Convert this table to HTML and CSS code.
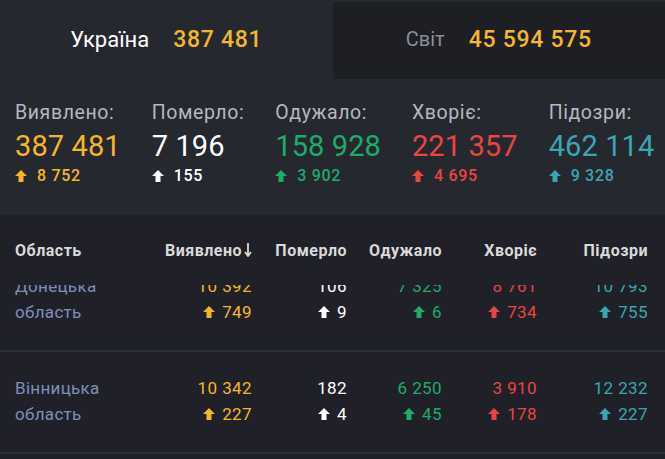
FILE: index.html
```html
<!DOCTYPE html>
<html lang="uk">
<head>
<meta charset="utf-8">
<link rel="stylesheet" href="styles.css">
</head>
<body>
<div class="page">
  <div class="tabs">
    <div class="tab tab-active"><span class="tab-name">Україна</span><span class="tab-num">387 481</span></div>
    <div class="tab tab-other"><span class="tab-name muted">Світ</span><span class="tab-num">45 594 575</span></div>
  </div>

  <div class="stats">
    <div class="stat">
      <div class="stat-label">Виявлено:</div>
      <div class="stat-value c-yellow">387 481</div>
      <div class="stat-delta c-yellow"><svg class="arr" viewBox="0 0 12 12"><polygon points="6,0 12,6 8.5,6 8.5,12 3.5,12 3.5,6 0,6"/></svg>8 752</div>
    </div>
    <div class="stat">
      <div class="stat-label">Померло:</div>
      <div class="stat-value c-white">7 196</div>
      <div class="stat-delta c-white"><svg class="arr" viewBox="0 0 12 12"><polygon points="6,0 12,6 8.5,6 8.5,12 3.5,12 3.5,6 0,6"/></svg>155</div>
    </div>
    <div class="stat">
      <div class="stat-label">Одужало:</div>
      <div class="stat-value c-green">158 928</div>
      <div class="stat-delta c-green"><svg class="arr" viewBox="0 0 12 12"><polygon points="6,0 12,6 8.5,6 8.5,12 3.5,12 3.5,6 0,6"/></svg>3 902</div>
    </div>
    <div class="stat">
      <div class="stat-label">Хворіє:</div>
      <div class="stat-value c-red">221 357</div>
      <div class="stat-delta c-red"><svg class="arr" viewBox="0 0 12 12"><polygon points="6,0 12,6 8.5,6 8.5,12 3.5,12 3.5,6 0,6"/></svg>4 695</div>
    </div>
    <div class="stat">
      <div class="stat-label">Підозри:</div>
      <div class="stat-value c-teal">462 114</div>
      <div class="stat-delta c-teal"><svg class="arr" viewBox="0 0 12 12"><polygon points="6,0 12,6 8.5,6 8.5,12 3.5,12 3.5,6 0,6"/></svg>9 328</div>
    </div>
  </div>

  <div class="table">
    <div class="thead grid">
      <div class="th left">Область</div>
      <div class="th">Виявлено<svg class="sort" viewBox="0 0 8 14"><path d="M4 0 V12 M1 9 L4 13 L7 9" fill="none" stroke="currentColor" stroke-width="1.8"/></svg></div>
      <div class="th">Померло</div>
      <div class="th">Одужало</div>
      <div class="th">Хворіє</div>
      <div class="th">Підозри</div>
    </div>
    <div class="tbody">
      <div class="row grid first">
        <div class="name">Донецька<br>область</div>
        <div class="cell c-yellow"><div>10 392</div><div><svg class="arr" viewBox="0 0 12 12"><polygon points="6,0 12,6 8.5,6 8.5,12 3.5,12 3.5,6 0,6"/></svg>749</div></div>
        <div class="cell c-white"><div>106</div><div><svg class="arr" viewBox="0 0 12 12"><polygon points="6,0 12,6 8.5,6 8.5,12 3.5,12 3.5,6 0,6"/></svg>9</div></div>
        <div class="cell c-green"><div>7 325</div><div><svg class="arr" viewBox="0 0 12 12"><polygon points="6,0 12,6 8.5,6 8.5,12 3.5,12 3.5,6 0,6"/></svg>6</div></div>
        <div class="cell c-red"><div>8 761</div><div><svg class="arr" viewBox="0 0 12 12"><polygon points="6,0 12,6 8.5,6 8.5,12 3.5,12 3.5,6 0,6"/></svg>734</div></div>
        <div class="cell c-teal"><div>10 793</div><div><svg class="arr" viewBox="0 0 12 12"><polygon points="6,0 12,6 8.5,6 8.5,12 3.5,12 3.5,6 0,6"/></svg>755</div></div>
      </div>
      <div class="row grid">
        <div class="name">Вінницька<br>область</div>
        <div class="cell c-yellow"><div>10 342</div><div><svg class="arr" viewBox="0 0 12 12"><polygon points="6,0 12,6 8.5,6 8.5,12 3.5,12 3.5,6 0,6"/></svg>227</div></div>
        <div class="cell c-white"><div>182</div><div><svg class="arr" viewBox="0 0 12 12"><polygon points="6,0 12,6 8.5,6 8.5,12 3.5,12 3.5,6 0,6"/></svg>4</div></div>
        <div class="cell c-green"><div>6 250</div><div><svg class="arr" viewBox="0 0 12 12"><polygon points="6,0 12,6 8.5,6 8.5,12 3.5,12 3.5,6 0,6"/></svg>45</div></div>
        <div class="cell c-red"><div>3 910</div><div><svg class="arr" viewBox="0 0 12 12"><polygon points="6,0 12,6 8.5,6 8.5,12 3.5,12 3.5,6 0,6"/></svg>178</div></div>
        <div class="cell c-teal"><div>12 232</div><div><svg class="arr" viewBox="0 0 12 12"><polygon points="6,0 12,6 8.5,6 8.5,12 3.5,12 3.5,6 0,6"/></svg>227</div></div>
      </div>
    </div>
  </div>
</div>
</body>
</html>
```

FILE: styles.css
```css
* { box-sizing: border-box; }
html, body { margin: 0; padding: 0; }
body {
  background: #202128;
  font-family: Roboto, "Noto Sans", sans-serif;
  color: #fff;
  width: 665px;
  height: 459px;
  overflow: hidden;
}
.page { display: flex; flex-direction: column; height: 459px; }

.c-yellow { color: #f5b62c; }
.c-white { color: #ffffff; }
.c-green { color: #1eab6b; }
.c-red { color: #ea4444; }
.c-teal { color: #3aa6b3; }

.tabs {
  display: flex;
  background: #262830;
  padding-top: 2px;
  height: 80px;
}
.tab {
  flex: 1;
  display: flex;
  align-items: center;
  justify-content: center;
  gap: 24px;
  font-size: 22px;
  padding-bottom: 3px;
}
.tab-active { background: #262830; }
.tab-other { background: #1e1f25; height: 77px; }
.tab-name { color: #ffffff; }
.tab-name.muted { color: #8a8e98; font-size: 20px; }
.tab-num { color: #f5b62c; font-weight: 500; font-size: 23px; letter-spacing: 0.7px; }

.stats {
  background: #262830;
  display: flex;
  gap: 31px;
  padding: 22px 0 0 15px;
  height: 135px;
  flex: none;
  white-space: nowrap;
}
.stat { display: flex; flex-direction: column; flex: none; }
.stat-label { font-size: 19.5px; line-height: 22px; color: #b4b8c0; letter-spacing: 0.6px; }
.stat-value { font-size: 29px; line-height: 34px; margin-top: 5px; letter-spacing: 0.1px; }
.stat-delta {
  font-size: 16px; line-height: 18px; margin-top: 4px;
  display: flex; align-items: center; gap: 10px; font-weight: 500;
  letter-spacing: 0.7px;
}
.arr { width: 12px; height: 12px; fill: currentColor; flex: none; }

.grid {
  display: grid;
  grid-template-columns: 140px 97px 95px 95px 95px 111px;
  padding: 0 17px 0 15px;
}
.thead {
  height: 70px;
  align-items: center;
}
.th {
  font-size: 16px;
  font-weight: 700;
  color: #dadada;
  display: flex;
  justify-content: flex-end;
  align-items: center;
  gap: 2px;
  letter-spacing: 0.5px;
  white-space: nowrap;
}
.th.left { justify-content: flex-start; }
.sort { width: 8px; height: 14px; color: #dadada; flex: none; }

.tbody { flex: 1; overflow: hidden; }
.row {
  padding-top: 23px;
  padding-bottom: 25px;
  border-bottom: 2px solid #2b2d35;
}
.row.first { margin-top: -35px; }
.name { font-size: 17px; line-height: 26px; color: #7e8fb8; letter-spacing: 0.3px; }
.cell {
  font-size: 17px;
  line-height: 26px;
  display: flex;
  flex-direction: column;
  align-items: flex-end;
  letter-spacing: 0.4px;
  white-space: nowrap;
}
.cell > div { display: flex; align-items: center; gap: 7px; height: 26px; }
```
